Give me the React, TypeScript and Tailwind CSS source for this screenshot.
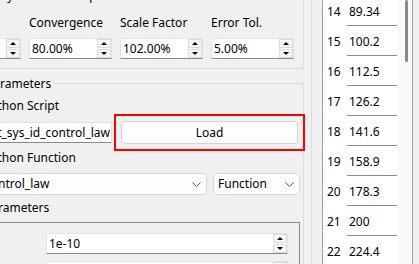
import React from "react";

function UpArrow() {
  return (
    <svg width="6" height="3" viewBox="0 0 6 3">
      <path d="M0 3 L3 0 L6 3 Z" fill="#000" />
    </svg>
  );
}
function DownArrow() {
  return (
    <svg width="6" height="3" viewBox="0 0 6 3">
      <path d="M0 0 L3 3 L6 0 Z" fill="#000" />
    </svg>
  );
}

function SpinButtons() {
  return (
    <div className="flex flex-col gap-px w-[14px] h-[19px] shrink-0">
      <div className="h-[9px] border border-[#dadada] bg-[#f6f6f6] flex items-center justify-center">
        <UpArrow />
      </div>
      <div className="h-[9px] border border-[#dadada] bg-[#f6f6f6] flex items-center justify-center">
        <DownArrow />
      </div>
    </div>
  );
}

function SpinBox({ value, className = "" }: { value: string; className?: string }) {
  return (
    <div
      className={
        "h-[21px] bg-white border border-[#e3e3e3] border-b-[#8a8a8a] flex items-center pl-[2px] " +
        className
      }
    >
      <span className="flex-1 whitespace-nowrap overflow-hidden">{value}</span>
      <SpinButtons />
    </div>
  );
}

function Chevron() {
  return (
    <svg width="9" height="5" viewBox="0 0 9 5" className="shrink-0">
      <polyline points="0.5,0.5 4.5,4.5 8.5,0.5" fill="none" stroke="#5a5a5a" strokeWidth="1" />
    </svg>
  );
}

function Combo({ value, className = "" }: { value: string; className?: string }) {
  return (
    <div
      className={
        "h-[22px] bg-[#fdfdfd] border border-[#d6d6d6] rounded-[4px] flex items-center pl-[4px] pr-[5px] " +
        className
      }
    >
      <span className="flex-1 whitespace-nowrap overflow-hidden">{value}</span>
      <Chevron />
    </div>
  );
}

const rows: [string, string][] = [
  ["14", "89.34"],
  ["15", "100.2"],
  ["16", "112.5"],
  ["17", "126.2"],
  ["18", "141.6"],
  ["19", "158.9"],
  ["20", "178.3"],
  ["21", "200"],
  ["22", "224.4"],
];

export default function App() {
  return (
    <div className="w-[419px] h-[264px] overflow-hidden bg-[#f0f0f0] flex text-[12px] leading-4 text-black font-['Noto_Sans',sans-serif]">
      {/* Left pane */}
      <div className="-ml-[24px] w-[336px] shrink-0 border-r border-[#dcdcdc] pr-[7px] flex flex-col">
        {/* Group 1 */}
        <div className="-mt-[12px] border-r border-b border-[#dcdcdc] pl-[8px] pb-[9px]">
          <div className="h-4 -ml-[2px] whitespace-nowrap">Delayed Lines Computation</div>
          <div className="-ml-[46px] mt-[11px] grid grid-cols-[83px_83px_83px_83px] gap-x-[8px] gap-y-[7px]">
            <div className="h-4" />
            <div className="h-4 whitespace-nowrap">Convergence</div>
            <div className="h-4 whitespace-nowrap">Scale Factor</div>
            <div className="h-4 whitespace-nowrap">Error Tol.</div>
            <SpinBox value="" />
            <SpinBox value="80.00%" />
            <SpinBox value="102.00%" />
            <SpinBox value="5.00%" />
          </div>
        </div>

        {/* Group 2 */}
        <div className="relative mt-[14px] flex-1 border-t border-r border-[#dcdcdc] pl-[8px] pt-[14px]">
          <div className="absolute -top-[8px] left-[10px] bg-[#f0f0f0] pr-[2px] whitespace-nowrap">
            Parameters
          </div>
          <div className="h-4 whitespace-nowrap">Python Script</div>
          <div className="mt-[7px] h-[23px] flex items-center gap-[9px]">
            <div className="w-[128px] h-[21px] bg-white border border-[#e3e3e3] border-b-[#8a8a8a] flex justify-end items-center overflow-hidden pr-[1px]">
              <span className="whitespace-nowrap">scripts/plant_sys_id_control_law</span>
            </div>
            <div className="-m-[7px] p-[5px] border-2 border-[#ff0000]">
              <button className="w-[177px] h-[23px] bg-[#fdfdfd] border border-[#d3d3d3] rounded-[4px] flex items-center justify-center">
                Load
              </button>
            </div>
          </div>
          <div className="mt-[6px] h-4 whitespace-nowrap">Python Function</div>
          <div className="mt-[7px] flex gap-[6px]">
            <Combo value="control_law" className="w-[227px] -ml-[4px]" />
            <Combo value="Function" className="w-[87px]" />
          </div>
          <div className="mt-[5px] h-4 whitespace-nowrap">Parameters</div>
          <div className="mt-[6px] w-[316px] h-[60px] border-t border-r border-[#8c8c8c] pt-[10px]">
            <SpinBox value="1e-10" className="ml-[62px] w-[242px]" />
            <SpinBox value="100" className="ml-[62px] w-[242px] mt-[7px]" />
          </div>
        </div>
      </div>

      {/* splitter gap */}
      <div className="w-[10px] shrink-0" />

      {/* Table */}
      <div className="w-[91px] shrink-0 border-l border-r border-[#a0a0a0] bg-white flex">
        <div className="w-[75px] -mt-[4px] flex flex-col">
          {rows.map(([n, v]) => (
            <div key={n} className="h-[30px] shrink-0 pt-[2px] flex">
              <div className="w-[24px] h-[27px] pl-[4px] flex items-center">{n}</div>
              <div className="w-[50px] h-[28px] bg-white border-b border-[#8a8a8a] pl-[2px] flex items-center">
                {v}
              </div>
            </div>
          ))}
        </div>
        <div className="w-[14px] bg-[#fafafa]">
          <div className="ml-[7px] w-[3px] h-[62px] bg-[#8a8a8a] rounded-full" />
        </div>
      </div>
    </div>
  );
}
